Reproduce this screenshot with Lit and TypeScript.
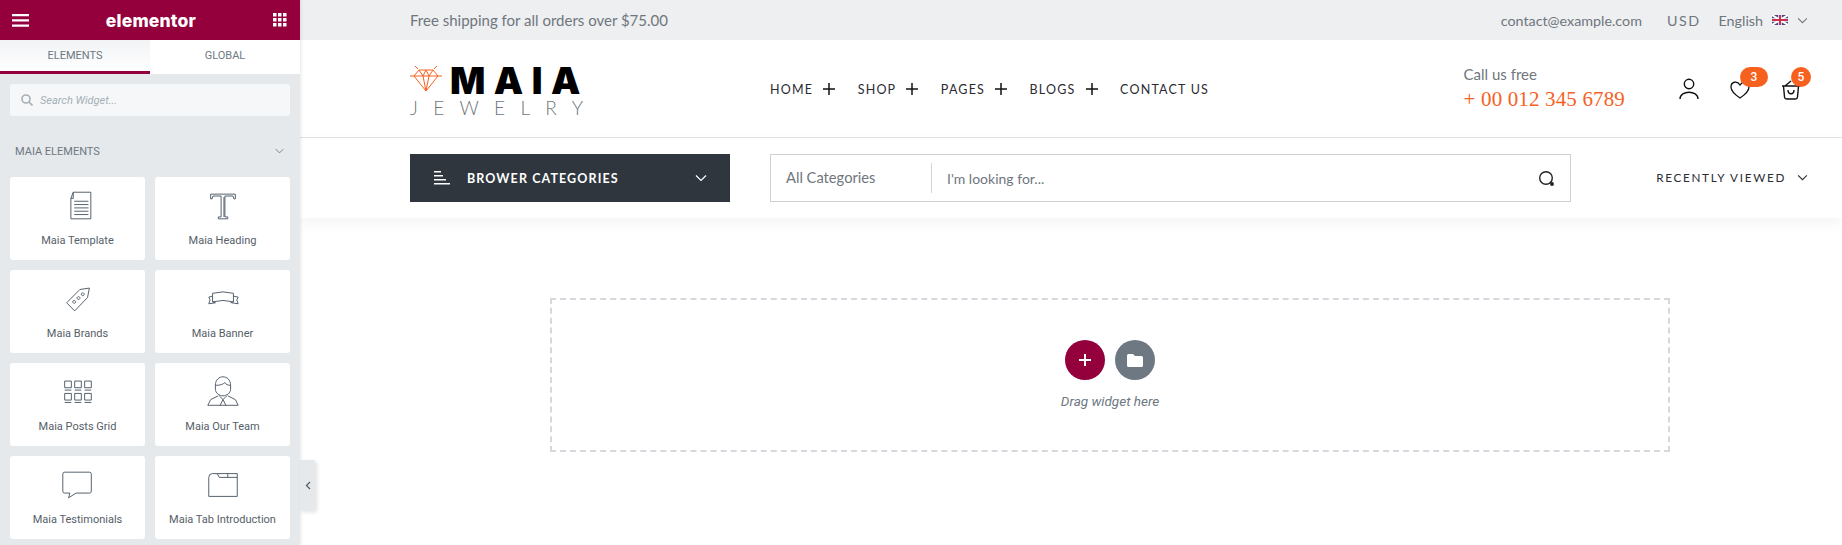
import { LitElement, html, css, svg } from 'lit';
import { customElement } from 'lit/decorators.js';

// dy nudges a glyph down inside its 40x40 box
const stroke = (body: unknown, dy = 0) => html`<svg class="w-icon" viewBox="0 0 40 40" fill="none" stroke="#4f5b67" stroke-width="1"><g transform="translate(0 ${dy})">${body}</g></svg>`;

const widgets = [
  { name: 'Maia Template', icon: stroke(svg`<path d="M15 3.500h18.500v28h-21V10zM15 3.500v6.500h-2.500M16 13h15M16 16.500h15M16 20h15M16 23.500h15M16 27h15"/>`, 2) },
  { name: 'Maia Heading', icon: stroke(svg`<path d="M7 5h26v5h-1.500l-1-3H22v22h3v2H15v-2h3V7H9.500l-1 3H7zM21 8v21"/>`, 2.5) },
  { name: 'Maia Brands', icon: stroke(svg`<path d="M32 8.500l-2 10-13.500 14-8.500-8.500L22 10zM25 13.500a1.500 1.500 0 1 0 .01 0M20.500 17.500a1.500 1.500 0 1 0 .01 0M16 21.500a1.500 1.500 0 1 0 .01 0"/>`) },
  { name: 'Maia Banner', icon: stroke(svg`<path d="M9 9q11-3 22 0v9q-11-3-22 0zM9 12l-4 1 1.500 3-1.500 4 7-1M31 12l5 1-1.500 3 1.500 4-7-1M9 18l3 1M31 18l-3 1"/>`, 5) },
  { name: 'Maia Posts Grid', icon: stroke(svg`<path d="M6 7h7v7H6zM16.500 7h7v7h-7zM27 7h7v7h-7zM6 20h7v7H6zM16.500 20h7v7h-7zM27 20h7v7h-7zM6 16.500h7M16.500 16.500h7M27 16.500h7M6 29.500h7M16.500 29.500h7M27 29.500h7"/>`, 1.5) },
  { name: 'Maia Our Team', icon: stroke(svg`<path d="M12 13c0-12 16-12 16 0v4c0 4-4 7-8 7s-8-3-8-7zM12 13c5 0 8-1 10-3 1 2 3 3 6 3M15 24l-8 4-3 6h32l-3-6-8-4M16 24l4 4 4-4M20 28l-3 6M20 28l3 6"/>`) },
  { name: 'Maia Testimonials', icon: stroke(svg`<path d="M6 4.500h26q2 0 2 2v18q0 2-2 2H18l-8 5 1.500-5H6q-2 0-2-2v-18q0-2 2-2z"/>`, 2) },
  { name: 'Maia Tab Introduction', icon: stroke(svg`<path d="M5 31V11q0-4 4-4h26v24zM16 11h19M16 11l-2-4M25 7v4"/>`, 1) },
];

const plus = html`<svg class="plus" viewBox="0 0 12 12" stroke="#111" stroke-width="1.500"><path d="M0 6h12M6 0v12"/></svg>`;
const chevron = (cls = 'chev') => html`<svg class=${cls} viewBox="0 0 12 8" fill="none" stroke="currentColor" stroke-width="1.200"><path d="M1 1.500l5 5 5-5"/></svg>`;

@customElement('app-root')
export class AppRoot extends LitElement {
  static styles = css`
    :host {
      display: flex;
      height: 100vh;
      overflow: hidden;
      background: #fff;
      font-family: 'Lato', sans-serif;
      color: #66707a;
    }
    .panel {
      width: 300px;
      flex: none;
      background: #e6e9ec;
      box-shadow: 1px 0 3px rgba(0, 0, 0, 0.1);
      display: flex;
      flex-direction: column;
      font-family: 'Roboto', sans-serif;
      position: relative;
      z-index: 2;
    }
    .panel-head {
      height: 40px;
      flex: none;
      background: #93003c;
      color: #fff;
      display: flex;
      align-items: center;
      justify-content: space-between;
      padding: 0 13px 0 12px;
    }
    .brand {
      font-family: 'Inter', sans-serif;
      font-size: 17.500px;
      font-weight: 800;
      letter-spacing: 0.200px;
    }
    .tabs {
      display: flex;
      height: 34px;
      flex: none;
      font-size: 11px;
      color: #6d7882;
    }
    .tab {
      flex: 1;
      display: flex;
      align-items: center;
      justify-content: center;
      background: #fff;
      padding-bottom: 3px;
      box-sizing: border-box;
    }
    .tab.active {
      background: linear-gradient(#f1f3f5, #fff);
      border-bottom: 3px solid #93003c;
      padding-bottom: 0;
    }
    .panel-body { padding: 10px; flex: none; }
    .search {
      height: 32px;
      background: #f6f7f8;
      border-radius: 3px;
      display: flex;
      align-items: center;
      gap: 7px;
      padding: 0 11px;
      font-size: 11px;
      font-style: italic;
      color: #a4afb7;
    }
    .section {
      display: flex;
      justify-content: space-between;
      align-items: center;
      font-size: 11px;
      color: #6d7882;
      margin: 27px 0 18px;
      padding: 0 6px 0 5px;
      height: 16px;
    }
    .section .chev { width: 9px; height: 6px; }
    .grid {
      display: grid;
      grid-template-columns: 135px 135px;
      gap: 10px;
    }
    .card {
      height: 83px;
      background: #fff;
      border-radius: 3px;
      display: flex;
      flex-direction: column;
      align-items: center;
      font-size: 11px;
      color: #556068;
    }
    .w-icon { width: 38px; height: 38px; margin: 10px 0 9px; flex: none; }
    .toggle {
      position: absolute;
      left: 300px;
      top: 460px;
      width: 15px;
      height: 50px;
      background: #e6e9ec;
      box-shadow: 2px 2px 4px rgba(0, 0, 0, 0.12);
      display: flex;
      align-items: center;
      justify-content: center;
      color: #556068;
    }
    .main {
      flex: 1;
      min-width: 0;
      display: flex;
      flex-direction: column;
    }
    .top {
      height: 40px;
      flex: none;
      background: #eeeff1;
      display: flex;
      align-items: center;
      padding: 0 34px 0 110px;
      font-size: 15px;
      color: #6f767d;
    }
    .top .right {
      margin-left: auto;
      display: flex;
      align-items: center;
      font-size: 14.300px;
    }
    .top .chev { width: 11px; height: 7px; margin-left: 9px; }
    .flag { width: 16px; height: 10px; margin-left: 9px; }
    .mail { margin-right: 25px; }
    .usd { margin-right: 18px; letter-spacing: 1.500px; }
    .header {
      height: 98px;
      flex: none;
      box-sizing: border-box;
      border-bottom: 1px solid #e4e4e4;
      display: flex;
      align-items: center;
      padding: 0 41px 0 110px;
    }
    .logo {
      width: 360px;
      flex: none;
      display: flex;
      flex-direction: column;
      margin-top: 6px;
    }
    .logo-top { display: flex; align-items: center; gap: 8px; height: 30px; }
    .diamond { width: 32px; height: 27px; flex: none; margin-top: -4px; }
    .maia {
      font-family: 'Inter', sans-serif;
      font-weight: 900;
      font-size: 37px;
      letter-spacing: 8.500px;
      color: #000;
      line-height: 30px;
    }
    .jewelry {
      font-size: 19px;
      font-weight: 300;
      letter-spacing: 15.300px;
      color: #70767b;
      line-height: 20px;
      margin-top: 2px;
    }
    .nav {
      display: flex;
      align-items: center;
      font-size: 12.500px;
      letter-spacing: 1.200px;
      color: #2b2b33;
      margin-top: 1px;
    }
    .nav span { display: flex; align-items: center; gap: 10px; margin-right: 22.500px; }
    .plus { width: 12px; height: 12px; margin-top: -1px; }
    .call { margin-left: auto; margin-right: 54px; margin-top: -2px; }
    .call small { display: block; font-size: 15px; color: #6f767d; line-height: 20px; }
    .call b {
      display: block;
      font-family: 'Liberation Serif', serif;
      font-weight: 400;
      font-size: 21px;
      letter-spacing: 0.150px;
      color: #f7611f;
      line-height: 24px;
      margin-top: 3px;
    }
    .actions { display: flex; align-items: center; gap: 31px; }
    .act { position: relative; width: 20px; height: 22px; }
    .act svg { width: 20px; height: 22px; display: block; }
    .badge {
      position: absolute;
      top: -11px;
      left: 10px;
      height: 20px;
      border-radius: 10px;
      background: #f7611f;
      color: #fff;
      font: 500 12px/20px 'Roboto', sans-serif;
      text-align: center;
    }
    .badge.wish { width: 28px; }
    .badge.cart { width: 20px; }
    .tools {
      height: 80px;
      flex: none;
      display: flex;
      align-items: center;
      padding: 0 34px 0 110px;
      box-shadow: 0 5px 14px rgba(0, 0, 0, 0.05);
    }
    .cats {
      width: 320px;
      height: 48px;
      flex: none;
      box-sizing: border-box;
      background: #2f363e;
      color: #fff;
      display: flex;
      align-items: center;
      padding: 0 23px 0 24px;
      margin-right: 40px;
      font-size: 12.500px;
      font-weight: 700;
      letter-spacing: 1.100px;
    }
    .cats .bars { width: 16px; height: 14px; margin-right: 17px; }
    .cats .chev { width: 12px; height: 8px; margin-left: auto; }
    .find {
      width: 801px;
      height: 48px;
      flex: none;
      box-sizing: border-box;
      border: 1px solid #d0d0d0;
      display: flex;
      align-items: center;
      font-size: 14.700px;
      color: #6f767d;
    }
    .find .sel {
      width: 161px;
      height: 30px;
      flex: none;
      box-sizing: border-box;
      border-right: 1px solid #d5d5d5;
      padding-left: 15px;
      line-height: 29px;
    }
    .find .q { flex: 1; padding-left: 15px; font-size: 14px; }
    .find svg { width: 17px; height: 17px; margin-right: 15px; }
    .recent {
      margin-left: auto;
      margin-bottom: 2px;
      display: flex;
      align-items: center;
      gap: 11px;
      font-size: 11.700px;
      letter-spacing: 1.700px;
      color: #2b2b33;
    }
    .recent .chev { width: 11px; height: 7px; }
    .canvas {
      flex: 1;
      padding: 80px 172px 0 250px;
    }
    .drop {
      height: 154px;
      box-sizing: border-box;
      border: 2px dashed #d5d8dc;
      display: flex;
      flex-direction: column;
      align-items: center;
      padding-top: 40px;
    }
    .btns { display: flex; gap: 10px; }
    .round {
      width: 40px;
      height: 40px;
      border-radius: 50%;
      display: flex;
      align-items: center;
      justify-content: center;
      background: #93003c;
    }
    .round.dark { background: #6d7882; }
    .hint {
      margin-top: 13px;
      font: italic 13.500px 'Roboto', sans-serif;
      color: #6d7882;
    }
  `;

  render() {
    return html`
      <aside class="panel">
        <div class="panel-head">
          <svg width="17" height="13" viewBox="0 0 17 13" fill="#fff"><path d="M0 0h17v2.200H0zM0 5.300h17v2.200H0zM0 10.600h17v2.200H0z"/></svg>
          <span class="brand">elementor</span>
          <svg width="14" height="14" viewBox="0 0 14 14" fill="#fff"><path d="M0 0h3.500v3.500H0zM5 0h3.500v3.500H5zM10 0h3.500v3.500H10zM0 5h3.500v3.500H0zM5 5h3.500v3.500H5zM10 5h3.500v3.500H10zM0 10h3.500v3.500H0zM5 10h3.500v3.500H5zM10 10h3.500v3.500H10z"/></svg>
        </div>
        <div class="tabs">
          <div class="tab active">ELEMENTS</div>
          <div class="tab">GLOBAL</div>
        </div>
        <div class="panel-body">
          <div class="search">
            <svg width="12" height="12" viewBox="0 0 12 12" fill="none" stroke="#a4afb7" stroke-width="1.600"><circle cx="5" cy="5" r="4"/><path d="M8 8l3.500 3.500"/></svg>
            <span>Search Widget...</span>
          </div>
          <div class="section"><span>MAIA ELEMENTS</span>${chevron()}</div>
          <div class="grid">
            ${widgets.map((w) => html`<div class="card">${w.icon}<span>${w.name}</span></div>`)}
          </div>
        </div>
        <div class="toggle">
          <svg width="6" height="9" viewBox="0 0 6 9" fill="none" stroke="currentColor" stroke-width="1.300"><path d="M5 1L1.500 4.500 5 8"/></svg>
        </div>
      </aside>
      <div class="main">
        <div class="top">
          <span>Free shipping for all orders over $75.00</span>
          <div class="right">
            <span class="mail">contact@example.com</span>
            <span class="usd">USD</span>
            <span>English</span>
            <svg class="flag" viewBox="0 0 16 10">
              <rect width="16" height="10" fill="#3d4a87"/>
              <path d="M0 0l16 10M16 0L0 10" stroke="#fff" stroke-width="2"/>
              <path d="M8 0v10M0 5h16" stroke="#fff" stroke-width="3.500"/>
              <path d="M8 0v10M0 5h16" stroke="#c8324a" stroke-width="2"/>
            </svg>
            ${chevron()}
          </div>
        </div>
        <div class="header">
          <div class="logo">
            <div class="logo-top">
              <svg class="diamond" viewBox="0 0 32 27" fill="none" stroke="#f7611f" stroke-width="1">
                <path d="M0 11h32M9 5h14l5 6-12 15L4 11zM9 5l4 6 3-6 3 6 4-6M13 11l3 15 3-15M5 1l3 3M27 1l-3 3"/>
              </svg>
              <span class="maia">MAIA</span>
            </div>
            <span class="jewelry">JEWELRY</span>
          </div>
          <div class="nav">
            <span>HOME ${plus}</span>
            <span>SHOP ${plus}</span>
            <span>PAGES ${plus}</span>
            <span>BLOGS ${plus}</span>
            <span>CONTACT US</span>
          </div>
          <div class="call"><small>Call us free</small><b>+ 00 012 345 6789</b></div>
          <div class="actions">
            <div class="act">
              <svg viewBox="0 0 20 22" fill="none" stroke="#111" stroke-width="1.400"><circle cx="10" cy="6" r="4.700"/><path d="M1 21c0-9 18-9 18 0"/></svg>
            </div>
            <div class="act">
              <svg viewBox="0 0 20 22" fill="none" stroke="#111" stroke-width="1.300"><path d="M10 20C4 16 1 13 1 9c0-5 6-7 9-2 3-5 9-3 9 2 0 4-3 7-9 11z"/></svg>
              <span class="badge wish">3</span>
            </div>
            <div class="act">
              <svg viewBox="0 0 20 22" fill="none" stroke="#111" stroke-width="1.400"><path d="M1 8h18M2.500 8l1 11q.2 2 2 2h9q1.800 0 2-2l1-11M4 8l6-5M7 12c0 5 6 5 6 0"/></svg>
              <span class="badge cart">5</span>
            </div>
          </div>
        </div>
        <div class="tools">
          <div class="cats">
            <svg class="bars" viewBox="0 0 16 14" fill="#fff"><path d="M0 0h7v1.600H0zM0 4h9v1.600H0zM0 8h12v1.600H0zM0 12h16v1.600H0z"/></svg>
            <span>BROWER CATEGORIES</span>
            ${chevron()}
          </div>
          <div class="find">
            <div class="sel">All Categories</div>
            <div class="q">I'm looking for...</div>
            <svg viewBox="0 0 17 17" fill="none" stroke="#222" stroke-width="1.400"><circle cx="8" cy="8" r="6.300"/><circle cx="14" cy="14" r="1.200" fill="#222"/></svg>
          </div>
          <div class="recent"><span>RECENTLY VIEWED</span>${chevron()}</div>
        </div>
        <div class="canvas">
          <div class="drop">
            <div class="btns">
              <div class="round">
                <svg width="14" height="14" viewBox="0 0 14 14" stroke="#fff" stroke-width="2"><path d="M1 7h12M7 1v12"/></svg>
              </div>
              <div class="round dark">
                <svg width="16" height="13" viewBox="0 0 16 13" fill="#fff"><path d="M1.500 0h4.500l2 2h6.500q1.500 0 1.500 1.500v8q0 1.500-1.500 1.500h-13q-1.500 0-1.500-1.500v-10q0-1.500 1.500-1.500z"/></svg>
              </div>
            </div>
            <div class="hint">Drag widget here</div>
          </div>
        </div>
      </div>
    `;
  }
}
